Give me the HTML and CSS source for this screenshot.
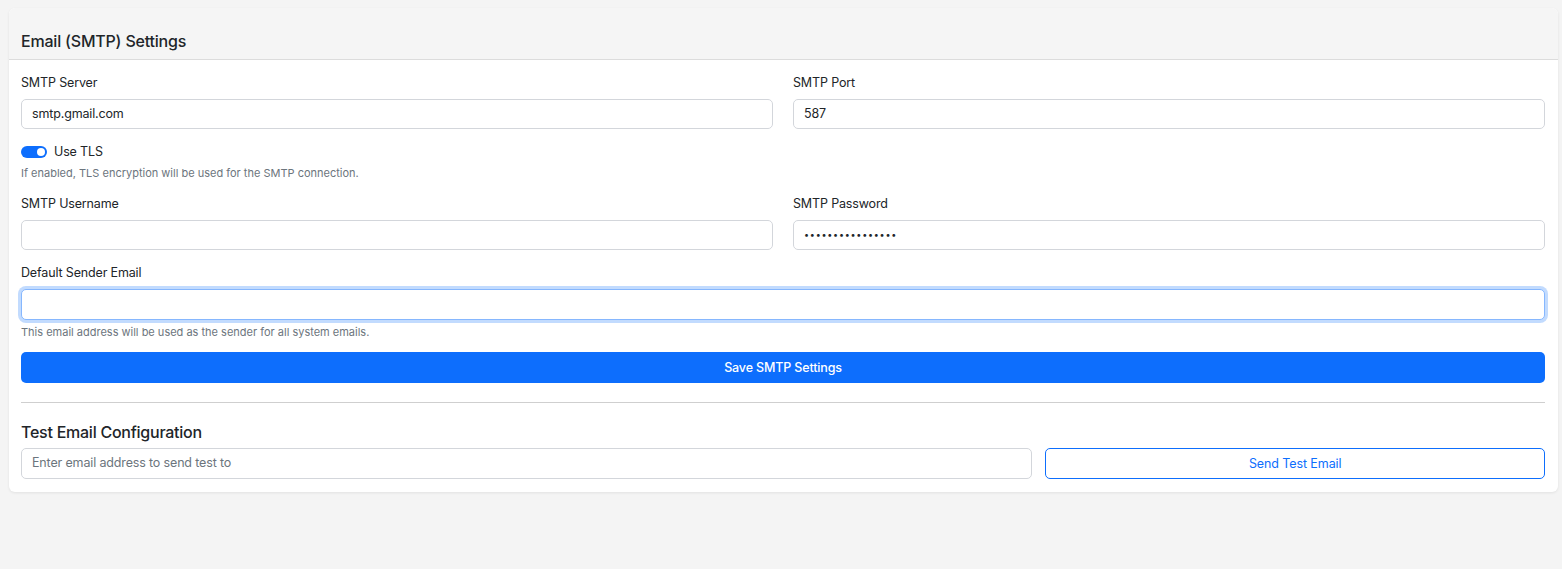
FILE: index.html
```html
<!DOCTYPE html>
<html lang="en">
<head>
<meta charset="utf-8">
<title>Email (SMTP) Settings</title>
<link rel="stylesheet" href="styles.css">
</head>
<body>
<div class="card">
  <div class="card-header">Email (SMTP) Settings</div>
  <div class="card-body">
    <div class="row two">
      <div class="field">
        <label class="label">SMTP Server</label>
        <div class="input">smtp.gmail.com</div>
      </div>
      <div class="field">
        <label class="label">SMTP Port</label>
        <div class="input">587</div>
      </div>
    </div>
    <div class="switch-row">
      <span class="switch"><span class="knob"></span></span>
      <span class="switch-label">Use TLS</span>
    </div>
    <div class="help tls-help">If enabled, TLS encryption will be used for the SMTP connection.</div>
    <div class="row two spaced">
      <div class="field">
        <label class="label">SMTP Username</label>
        <div class="input"></div>
      </div>
      <div class="field">
        <label class="label">SMTP Password</label>
        <div class="input dots">••••••••••••••••</div>
      </div>
    </div>
    <div class="field sender">
      <label class="label">Default Sender Email</label>
      <div class="input focus"></div>
    </div>
    <div class="help sender-help">This email address will be used as the sender for all system emails.</div>
    <button class="btn-primary">Save SMTP Settings</button>
    <hr class="divider">
    <div class="section-title">Test Email Configuration</div>
    <div class="test-row">
      <div class="input placeholder">Enter email address to send test to</div>
      <button class="btn-outline">Send Test Email</button>
    </div>
  </div>
</div>
</body>
</html>
```
FILE: styles.css
```css
* { box-sizing: border-box; }
html, body { margin: 0; }
body {
  background: #f4f4f4;
  font-family: "Inter", "Liberation Sans", sans-serif;
  color: #212529;
  padding: 8px 4px 0 9px;
  height: 569px;
}
.card {
  background: #fff;
  border-radius: 6px;
  box-shadow: 0 1px 3px rgba(0,0,0,0.08);
  overflow: hidden;
}
.card-header {
  background: #f5f5f5;
  border-bottom: 1px solid #dcdcdc;
  padding: 23px 12px 8px;
  font-size: 16px;
  line-height: 20px;
  font-weight: 500;
  letter-spacing: -0.2px;
  color: #212529;
}
.card-body {
  padding: 13px 13px 13px 12px;
}
.two {
  display: grid;
  grid-template-columns: 1fr 1fr;
  column-gap: 20px;
}
.spaced { margin-top: 14px; }
.label {
  display: block;
  font-size: 12.5px;
  letter-spacing: -0.15px;
  line-height: 18px;
  padding-top: 1px;
  margin-bottom: 7px;
}
.input {
  height: 30px;
  border: 1px solid #d3d6db;
  border-radius: 5px;
  padding: 0 10px;
  font-size: 12.5px;
  letter-spacing: -0.15px;
  line-height: 28px;
  color: #212529;
  background: #fff;
}
.input.dots { font-size: 9px; letter-spacing: 0.75px; }
.input.focus {
  height: 31px;
  border-color: #86b7fe;
  box-shadow: 0 0 0 3px rgba(13,110,253,0.25);
}
.input.placeholder { color: #6c757d; height: 31px; }
.switch-row {
  margin-top: 14px;
  display: flex;
  align-items: center;
  height: 18px;
  gap: 7px;
}
.switch {
  width: 26px;
  height: 12px;
  border-radius: 6px;
  background: #0d6efd;
  display: flex;
  align-items: center;
  justify-content: flex-end;
  padding-right: 2px;
}
.knob {
  width: 8px;
  height: 8px;
  border-radius: 50%;
  background: #fff;
}
.switch-label { font-size: 12.5px; letter-spacing: -0.15px; line-height: 18px; }
.help {
  font-size: 11px;
  line-height: 14px;
  color: #6c757d;
}
.tls-help { margin-top: 5px; }
.sender-help { margin-top: 5px; }
.sender { margin-top: 13px; }
.btn-primary {
  display: block;
  width: 100%;
  margin-top: 13px;
  height: 31px;
  border: none;
  border-radius: 5px;
  background: #0d6efd;
  color: #fff;
  font-family: inherit;
  font-size: 12.5px;
  letter-spacing: -0.15px;
  font-weight: 500;
}
.divider {
  margin: 19px 0;
  border: 0;
  border-top: 1px solid #cfcfcf;
}
.section-title {
  font-size: 16px;
  line-height: 20px;
  font-weight: 500;
  letter-spacing: -0.25px;
  margin-bottom: 6px;
}
.test-row {
  display: grid;
  grid-template-columns: 1012fr 500fr;
  column-gap: 13px;
}
.btn-outline {
  height: 31px;
  border: 1px solid #0d6efd;
  border-radius: 5px;
  background: #fff;
  color: #0d6efd;
  font-family: inherit;
  font-size: 12.5px;
  letter-spacing: -0.1px;
}
```
